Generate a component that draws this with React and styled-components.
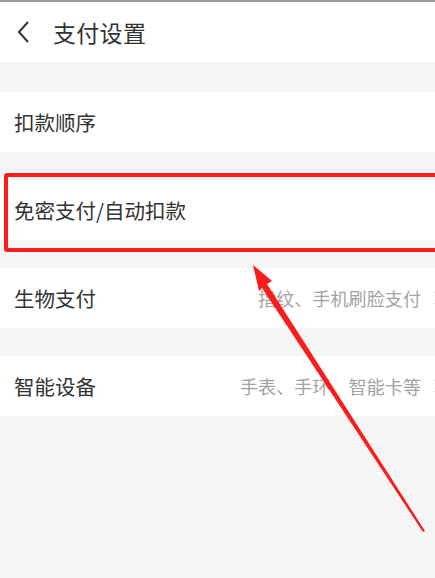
import React from 'react';
import styled, { createGlobalStyle } from 'styled-components';

const Global = createGlobalStyle`
  html, body {
    margin: 0;
    padding: 0;
    background: #f5f5f5;
  }
  body {
    font-family: "Noto Sans CJK SC", "Noto Sans", sans-serif;
  }
`;

const Page = styled.div`
  position: relative;
  width: 435px;
  height: 578px;
  overflow: hidden;
  background: #f5f5f5;
  border-top: 2px solid #9a9a9a;
  box-sizing: border-box;
`;

const Header = styled.div`
  height: 60px;
  background: #fff;
  display: flex;
  align-items: center;
  padding-left: 16px;
  gap: 21px;
`;

const Title = styled.div`
  font-size: 23px;
  color: #333;
  letter-spacing: 0.3px;
`;

const List = styled.div`
  display: flex;
  flex-direction: column;
  gap: 28px;
  padding-top: 30px;
`;

const Row = styled.div`
  position: relative;
  height: 60px;
  background: #fff;
  display: flex;
  align-items: center;
  justify-content: space-between;
  padding: 0 14px 0 14px;
`;

const Label = styled.div`
  font-size: 20.5px;
  color: #333;
`;

const Hint = styled.div`
  font-size: 18px;
  color: #a3a3a3;
  letter-spacing: 0.1px;
`;

const Edge = styled.svg`
  position: absolute;
  right: -7px;
  top: 50%;
  transform: translateY(-50%);
`;

const Highlight = styled.div`
  position: absolute;
  left: 4px;
  top: -7px;
  right: -10px;
  bottom: -12px;
  border: 4px solid #fb1c1c;
  border-radius: 3px;
  pointer-events: none;
`;

const Overlay = styled.svg`
  position: absolute;
  left: 0;
  top: 0;
  pointer-events: none;
`;

const Back = () => (
  <svg width="16" height="24" viewBox="0 0 16 24">
    <path d="M12 2 L3 12 L12 22" fill="none" stroke="#333" strokeWidth="2" />
  </svg>
);

const Chevron = () => (
  <Edge width="10" height="16" viewBox="0 0 10 16">
    <path d="M2 2 L8 8 L2 14" fill="none" stroke="#e2e2e2" strokeWidth="1.5" />
  </Edge>
);

const rows = [
  { label: '扣款顺序' },
  { label: '免密支付/自动扣款', marked: true },
  { label: '生物支付', hint: '指纹、手机刷脸支付' },
  { label: '智能设备', hint: '手表、手环、智能卡等' },
];

const App = () => {
  return (
    <Page>
      <Global />
      <Header>
        <Back />
        <Title>支付设置</Title>
      </Header>
      <List>
        {rows.map((r) => (
          <Row key={r.label}>
            <Label>{r.label}</Label>
            {r.hint && <Hint>{r.hint}</Hint>}
            {r.hint && <Chevron />}
            {r.marked && <Highlight />}
          </Row>
        ))}
      </List>
      <Overlay width="435" height="578" viewBox="0 0 435 578">
        <polygon points="253,263 272,279 267,282 425,529 423,530 262,286 259,289" fill="#fb1c1c" />
      </Overlay>
    </Page>
  );
};

export default App;
